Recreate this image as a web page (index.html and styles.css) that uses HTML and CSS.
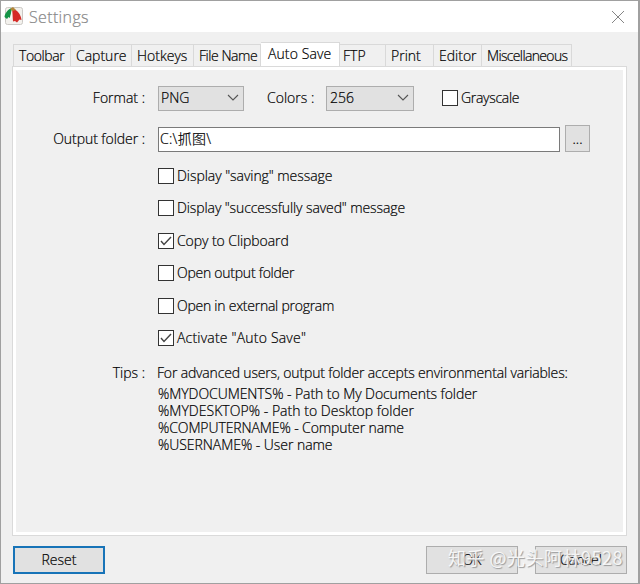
FILE: index.html
```html
<!DOCTYPE html>
<html lang="en">
<head>
<meta charset="utf-8">
<title>Settings</title>
<link rel="stylesheet" href="styles.css">
</head>
<body>
<div class="window">
  <header class="titlebar">
    <svg class="logo" width="20" height="20" viewBox="0 0 20 20"><rect x="1.5" y="1.5" width="17" height="17" rx="2" fill="#f3f1ed" stroke="#cbc8c4"/><path d="M8 2C4 3 1 7 .5 11L3 13l1.500-2L6 12z" fill="#159447"/><path d="M8.500 3 6 12l1 2.500 2.500-8z" fill="#f8faf2"/><path d="M8 2c5 2 9 6 9.500 12l-2-.5-2.500 3-2-1.500-2 .5L8.500 8z" fill="#d52b27"/><path d="m6 3 3-2 3 3-3.500 1z" fill="#b18337"/></svg>
    <h1>Settings</h1>
    <svg class="close" width="14" height="14" viewBox="0 0 14 14"><path d="m1 1 12 12M13 1 1 13" fill="none" stroke="#858585"/></svg>
  </header>
  <nav class="tabs">
    <span class="tab t1"><b>Toolbar</b></span><span class="tab t2"><b>Capture</b></span><span class="tab t3"><b>Hotkeys</b></span><span class="tab t4"><b>File Name</b></span><span class="tab t5 active"><b>Auto Save</b></span><span class="tab t6"><b>FTP</b></span><span class="tab t7"><b>Print</b></span><span class="tab t8"><b>Editor</b></span><span class="tab t9"><b>Miscellaneous</b></span>
  </nav>
  <main class="panel">
    <div class="row format-row">
      <span class="label">Format :</span>
      <div class="select format">PNG<svg width="12" height="8" viewBox="0 0 12 8"><path d="m1 1 5 5 5-5"/></svg></div>
      <span class="colors-label">Colors :</span>
      <div class="select colors">256<svg width="12" height="8" viewBox="0 0 12 8"><path d="m1 1 5 5 5-5"/></svg></div>
      <div class="check gray"><i></i><span>Grayscale</span></div>
    </div>
    <div class="row folder-row">
      <span class="label">Output folder :</span>
      <div class="field">C:\抓图\</div>
      <div class="browse">...</div>
    </div>
    <div class="checks">
      <div class="check"><i></i><span class="c1">Display "saving" message</span></div>
      <div class="check"><i></i><span class="c2">Display "successfully saved" message</span></div>
      <div class="check"><i><svg viewBox="0 0 14 14"><path d="m2 7 3 3.5L12 3"/></svg></i><span class="c3">Copy to Clipboard</span></div>
      <div class="check"><i></i><span class="c4">Open output folder</span></div>
      <div class="check"><i></i><span class="c5">Open in external program</span></div>
      <div class="check"><i><svg viewBox="0 0 14 14"><path d="m2 7 3 3.5L12 3"/></svg></i><span class="c6">Activate "Auto Save"</span></div>
    </div>
    <div class="tips">
      <span class="label">Tips :</span>
      <div><p class="intro">For advanced users, output folder accepts environmental variables:</p>
      <ul><li class="v1">%MYDOCUMENTS% - Path to My Documents folder</li><li class="v2">%MYDESKTOP% - Path to Desktop folder</li><li class="v3">%COMPUTERNAME% - Computer name</li><li class="v4">%USERNAME% - User name</li></ul></div>
    </div>
  </main>
  <footer class="actions"><div class="button reset">Reset</div><div class="button">OK</div><div class="button cancel">Cancel</div></footer>
  <div class="watermark">知乎 @光头阿林9528</div>
</div>
</body>
</html>
```
FILE: styles.css
```css
* { box-sizing: border-box; }
body { margin: 0; font: 300 14px/18px "Open Sans", "Noto Sans", "Noto Sans CJK SC", sans-serif; color: #000; -webkit-text-stroke: .2px; }
.window { position: relative; width: 640px; height: 584px; background: #f0f0f0; border: 1px solid #a0a0a0; border-right-width: 2px; overflow: hidden; white-space: nowrap; display: flex; flex-direction: column; }
.titlebar { flex: none; height: 31px; background: #fff; display: flex; align-items: center; padding: 0 13px 0 3px; }
.logo { margin-top: -1px; }
h1 { margin: 0 auto 0 5px; font-size: 16px; font-weight: 300; letter-spacing: .35px; color: #888; }
.tabs { flex: none; height: 34px; display: flex; align-items: flex-end; padding-left: 12px; }
.tab { height: 22px; border: 1px solid #d9d9d9; border-left-width: 0; border-bottom: 0; display: flex; align-items: center; padding-left: 5px; }
.tab b { font-weight: inherit; }
.t1 { width: 58px; border-left-width: 1px; letter-spacing: -.4px; }
.t2 { width: 61px; }
.t3 { width: 62px; }
.t4 { width: 67px; letter-spacing: -.45px; }
.t5 { width: 79px; letter-spacing: .1px; }
.t6 { width: 46px; padding-left: 3px; }
.t7 { width: 48px; }
.t8 { width: 48px; }
.t9 { width: 90px; letter-spacing: -.65px; }
.tab.active { height: 24px; background: #fff; padding: 0 0 1px 7px; }
.panel { flex: none; width: 615px; height: 470px; margin-left: 11px; border: 1px solid #dadada; box-shadow: inset 0 0 0 3px #fff; padding-top: 16px; }
.row { display: flex; align-items: center; }
.format-row { height: 30px; }
.label { flex: none; width: 132px; margin-right: 13px; text-align: right; }
.select { height: 25px; border: 1px solid #adadad; background: #e1e1e1; display: flex; align-items: center; justify-content: space-between; padding: 0 4px 0 2px; }
.select svg { fill: none; stroke: #555; stroke-width: 1.1; }
.format { width: 86px; }
.colors { width: 88px; margin-left: 12px; padding-left: 3px; }
.colors-label { width: 47px; margin-left: 23px; }
.gray { margin-left: 28px; letter-spacing: -.3px; }
.check { display: flex; align-items: center; height: 18px; gap: 3px; }
.check i { flex: none; width: 16px; height: 16px; border: 1px solid #333; background: #fff; }
.check svg { display: block; fill: none; stroke: #444; stroke-width: 1.4; }
.c1 { letter-spacing: -.05px; }
.c2 { letter-spacing: -.1px; }
.c3 { letter-spacing: -.07px; }
.c4 { letter-spacing: -.25px; }
.c5 { letter-spacing: -.25px; }
.c6 { letter-spacing: .2px; }
.folder-row { height: 28px; margin-top: 12px; }
.folder-row .label { letter-spacing: -.05px; }
.field { width: 402px; height: 25px; border: 1px solid #7a7a7a; background: #fff; padding: 2px 1px; letter-spacing: .3px; }
.browse { width: 25px; height: 27px; border: 1px solid #adadad; background: #e1e1e1; margin-left: 5px; text-align: center; line-height: 26px; margin-top: -1px; }
.checks { margin: 14px 0 0 145px; display: grid; grid-auto-rows: 18px; row-gap: 14.4px; }
.tips { display: flex; margin-top: 17px; }
p, ul { margin: 0; padding: 0; }
.intro { margin-left: -1px; letter-spacing: -.165px; }
.tips ul { list-style: none; line-height: 17px; margin: 3px 0 0; }
.v1 { letter-spacing: -.07px; }
.v2 { letter-spacing: .03px; }
.v3 { letter-spacing: -.1px; }
.v4 { letter-spacing: -.05px; }
.actions { display: flex; padding: 10px 11px 0 12px; }
.button { width: 92px; height: 28px; border: 1px solid #adadad; background: #e1e1e1; text-align: center; line-height: 26px; }
.reset { border: 2px solid #1874b8; line-height: 24px; margin-right: auto; }
.cancel { margin-left: 17px; }
.watermark { position: absolute; left: 447px; top: 544px; font: 400 18px/24px "Noto Sans CJK SC", sans-serif; letter-spacing: .5px; color: #ffffffd9; text-shadow: 1px 1px 1px #999; -webkit-text-stroke: 0; }
```
